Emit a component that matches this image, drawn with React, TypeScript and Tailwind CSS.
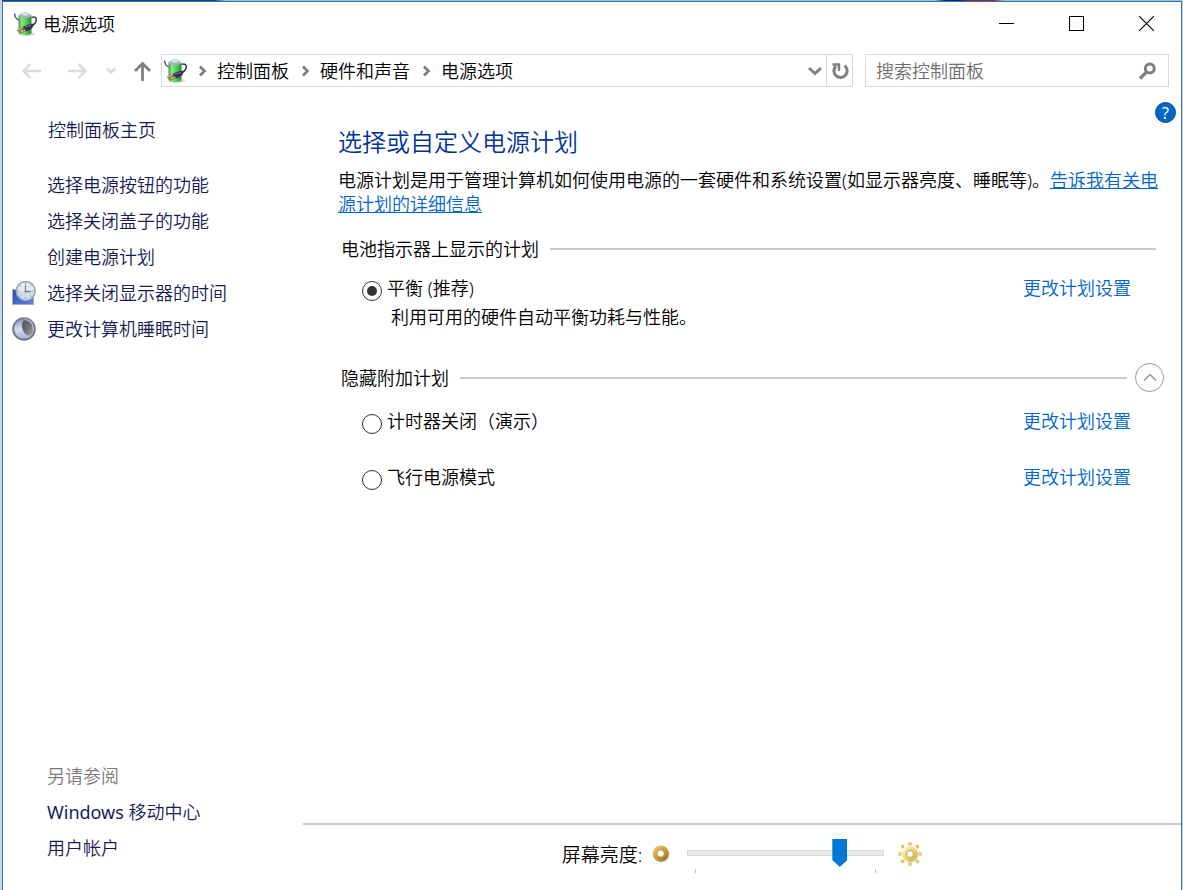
import { useState } from 'react';

type Plan = {
  id: string;
  name: string;
  description?: string;
};

const shownPlans: Plan[] = [
  { id: 'balanced', name: '平衡 (推荐)', description: '利用可用的硬件自动平衡功耗与性能。' },
];

const extraPlans: Plan[] = [
  { id: 'timers-off', name: '计时器关闭（演示）' },
  { id: 'airplane', name: '飞行电源模式' },
];

const breadcrumbs = ['控制面板', '硬件和声音', '电源选项'];

const tasks = [
  { label: '选择电源按钮的功能' },
  { label: '选择关闭盖子的功能' },
  { label: '创建电源计划' },
  { label: '选择关闭显示器的时间', icon: <DisplayClockIcon /> },
  { label: '更改计算机睡眠时间', icon: <MoonIcon /> },
];

// 绿色电池 + 电源插头
function BatteryIcon() {
  return (
    <svg viewBox="0 0 24 24" className="size-6 shrink-0" aria-hidden="true">
      <defs>
        <linearGradient id="cell" x1="0" x2="1">
          <stop offset="0" stopColor="#3f9a45" />
          <stop offset="0.25" stopColor="#8fe48c" />
          <stop offset="0.6" stopColor="#4fd057" />
          <stop offset="1" stopColor="#2c8a36" />
        </linearGradient>
      </defs>
      <ellipse cx="13" cy="22" rx="8" ry="1.8" fill="#d4d4d4" />
      <path d="M0.500 1.500c0.400 3 1.500 5.500 4.500 6.500" fill="none" stroke="#4c4f63" strokeWidth="1.400" />
      <path d="M17.500 5.500c3.500-1.500 5.500 0.500 4.700 3.500s-3 4-5 5.500" fill="none" stroke="#3c3e56" strokeWidth="1.600" />
      <path d="M4.500 3.500v17.500c1 2.700 12 2.700 13 0V3.500z" fill="url(#cell)" />
      <ellipse cx="11" cy="3.600" rx="6.500" ry="2.300" fill="#a9b6bf" />
      <ellipse cx="11" cy="2.300" rx="3.500" ry="1.700" fill="#dfe9ef" stroke="#8f9ca5" strokeWidth="0.500" />
      <path d="M19.500 11.500l-6 1.200-5 2.300 0.500 3 4.500 1.500 5-3.500z" fill="#34354a" />
      <path d="M11 15l6-1.500" stroke="#777a92" strokeWidth="1" />
      <path d="M9.500 15.500l-6 3.200M11.500 18l-5 2.500" stroke="#8a6a40" strokeWidth="2.200" />
      <path d="M9 15.400l-5 2.700M11 17.900l-4 2" stroke="#f1dfa8" strokeWidth="0.900" />
    </svg>
  );
}

function DisplayClockIcon() {
  return (
    <svg viewBox="0 0 24 24" className="size-6" aria-hidden="true">
      <defs>
        <linearGradient id="screen" x1="0" y1="0" x2="1" y2="1">
          <stop offset="0" stopColor="#2547b8" />
          <stop offset="1" stopColor="#5f86e6" />
        </linearGradient>
      </defs>
      <rect x="0.500" y="8.500" width="21" height="15" fill="url(#screen)" stroke="#a9aeb8" />
      <circle cx="13.700" cy="10" r="9.300" fill="#e3eff4" stroke="#a3a8ab" strokeWidth="1.800" />
      <path d="M6 11a7.700 7.700 0 0 0 15.400 0c-4-1-11-1-15.400 0z" fill="#c9dfea" />
      <path d="M13.700 2v2M13.700 16v2M5.700 10h2M19.700 10h2M8.200 4.500l1.200 1.200M19.200 4.500l-1.200 1.200M8.200 15.500l1.200-1.200M19.200 15.500l-1.200-1.200" stroke="#8799a4" strokeWidth="1" />
      <path d="M13.500 4.500v7M12.500 10.500h6.500" fill="none" stroke="#73828b" strokeWidth="1.300" />
    </svg>
  );
}

function MoonIcon() {
  return (
    <svg viewBox="0 0 24 24" className="size-6" aria-hidden="true">
      <defs>
        <linearGradient id="night" x1="0" x2="1" y1="0" y2="1">
          <stop offset="0" stopColor="#4f5052" />
          <stop offset="0.500" stopColor="#6d6d6e" />
          <stop offset="1" stopColor="#a3a3a2" />
        </linearGradient>
        <linearGradient id="moon" x1="0" x2="0" y1="0" y2="1">
          <stop offset="0" stopColor="#7f96c8" />
          <stop offset="0.500" stopColor="#d3dcf6" />
          <stop offset="1" stopColor="#a3afd2" />
        </linearGradient>
      </defs>
      <circle cx="12" cy="12" r="10.800" fill="url(#moon)" stroke="#7a7b7f" strokeWidth="2" />
      <path d="M12.500 2.500C19 3 22 9 20.500 16c-1.500 3-3.500 3-5.500 2C10 15 8 7 12.500 2.500z" fill="url(#night)" />
      <path d="M12.500 2.500c5 0.300 8 3.500 8.700 8" fill="none" stroke="#9cb6ee" strokeWidth="1.300" />
    </svg>
  );
}

function DimIcon() {
  return (
    <svg viewBox="0 0 18 18" className="size-[18px]" aria-hidden="true">
      <defs>
        <linearGradient id="dim" x1="0" x2="1" y1="0" y2="1">
          <stop offset="0" stopColor="#efc266" />
          <stop offset="1" stopColor="#a8741c" />
        </linearGradient>
      </defs>
      <circle cx="9.500" cy="9.700" r="8" fill="#000" opacity="0.180" />
      <circle cx="8.700" cy="8.500" r="5.800" fill="#fff" stroke="url(#dim)" strokeWidth="4.500" />
      <circle cx="8.700" cy="8.500" r="3.500" fill="none" stroke="#a9792c" strokeWidth="0.600" />
    </svg>
  );
}

function SunIcon() {
  return (
    <svg viewBox="0 0 24 24" className="size-6" aria-hidden="true">
      <defs>
        <linearGradient id="sun" x1="0" x2="1" y1="0" y2="1">
          <stop offset="0" stopColor="#f8eeb8" />
          <stop offset="0.600" stopColor="#ecd260" />
          <stop offset="1" stopColor="#d3ac40" />
        </linearGradient>
      </defs>
      <circle cx="12.600" cy="12.800" r="8" fill="#000" opacity="0.120" />
      <path
        d="M12 0.500v3M12 20.500v3M0.500 12h3M20.500 12h3M3.600 3.600l2 2M18.400 18.400l2 2M3.600 20.400l2-2M18.400 5.600l2-2"
        stroke="#c9a030"
        strokeWidth="3"
      />
      <path
        d="M12 0.500v2.500M12 20.500v2.500M0.500 12h2.500M20.500 12h2.500M3.600 3.600l1.700 1.700M18.400 18.400l1.700 1.700M3.600 20.400l1.700-1.700M18.400 5.600l1.700-1.700"
        stroke="#efd662"
        strokeWidth="1.800"
      />
      <circle cx="12" cy="12" r="5.600" fill="#fff" stroke="url(#sun)" strokeWidth="4" />
      <circle cx="12" cy="12" r="3.500" fill="none" stroke="#a89468" strokeWidth="0.900" />
    </svg>
  );
}

function ChevronRight() {
  return (
    <svg viewBox="0 0 10 12" className="h-3 w-[10px] shrink-0" fill="none" stroke="#7f7f7f" strokeWidth="2.800" aria-hidden="true">
      <path d="M2 1.500l4.500 4.500L2 10.500" />
    </svg>
  );
}

function TitleBar() {
  return (
    <header className="flex h-[43px] items-center pl-[11px]">
      <BatteryIcon />
      <h1 className="ml-[5px] flex-1 text-[18px] leading-6">电源选项</h1>
      <button type="button" aria-label="最小化" className="grid h-full w-[70px] place-items-center">
        <svg viewBox="0 0 15 15" className="size-[15px]" stroke="#000" shapeRendering="crispEdges">
          <path d="M0 7.500h15" />
        </svg>
      </button>
      <button type="button" aria-label="最大化" className="grid h-full w-[70px] place-items-center">
        <svg viewBox="0 0 15 15" className="size-[15px]" fill="none" stroke="#000" shapeRendering="crispEdges">
          <rect x="0.500" y="0.500" width="14" height="14" />
        </svg>
      </button>
      <button type="button" aria-label="关闭" className="grid h-full w-[70px] place-items-center">
        <svg viewBox="0 0 15 15" className="size-[15px]" stroke="#000" strokeWidth="1.100">
          <path d="M0 0l15 15M15 0L0 15" />
        </svg>
      </button>
    </header>
  );
}

function NavBar() {
  return (
    <div className="mt-[9px] flex h-[33px] items-center pr-3 pl-[18px]">
      <button type="button" aria-label="后退">
        <svg viewBox="0 0 20 18" className="h-[18px] w-5" fill="none" stroke="#dcdcdc" strokeWidth="2.500">
          <path d="M20 9H2.500M9.500 2l-7 7 7 7" />
        </svg>
      </button>
      <button type="button" aria-label="前进" className="ml-[27px]">
        <svg viewBox="0 0 20 18" className="h-[18px] w-5" fill="none" stroke="#dcdcdc" strokeWidth="2.500">
          <path d="M0 9h17.500M10.500 2l7 7-7 7" />
        </svg>
      </button>
      <button type="button" aria-label="最近的位置" className="ml-[17px]">
        <svg viewBox="0 0 12 8" className="h-2 w-3" fill="none" stroke="#dcdcdc" strokeWidth="2.500">
          <path d="M2 1.500l4 4 4-4" />
        </svg>
      </button>
      <button type="button" aria-label="向上" className="ml-4">
        <svg viewBox="0 0 19 20" className="h-5 w-[19px]" fill="none" stroke="#7f7f7f" strokeWidth="2.800">
          <path d="M9.500 20V3M2 10l7.500-7.500L17 10" />
        </svg>
      </button>

      <div className="ml-[9px] flex h-full flex-1 items-center border border-[#d9d9d9] pl-[2px]">
        <BatteryIcon />
        <nav aria-label="位置" className="flex flex-1 items-center">
          {breadcrumbs.map((crumb, i) => (
            <span key={crumb} className={i === 0 ? 'ml-[10px] flex items-center' : 'ml-3 flex items-center'}>
              <ChevronRight />
              <a href="#" className="ml-[9px] text-[18px] leading-6">
                {crumb}
              </a>
            </span>
          ))}
        </nav>
        <button type="button" aria-label="以前的位置" className="grid h-full w-[22px] place-items-center">
          <svg viewBox="0 0 14 10" className="h-[10px] w-[14px]" fill="none" stroke="#7f7f7f" strokeWidth="3">
            <path d="M1 2l6 5.500L13 2" />
          </svg>
        </button>
        <button type="button" aria-label="刷新" className="grid h-full w-[26px] place-items-center border-l border-[#d9d9d9]">
          <svg viewBox="0 0 18 18" className="size-[18px]" fill="none" stroke="#7f7f7f" strokeWidth="3">
            <path d="M13.500 3.600a6.600 6.600 0 1 1-8.500 0.500" />
            <path d="M1.500 2.500h6.500V9" strokeWidth="2.400" />
          </svg>
        </button>
      </div>

      <div className="ml-3 flex h-full w-[304px] items-center border border-[#d9d9d9] pr-3 pl-[10px]">
        <input
          type="text"
          aria-label="搜索控制面板"
          placeholder="搜索控制面板"
          className="min-w-0 flex-1 text-[18px] leading-6 outline-none placeholder:text-[#6d6d6d]"
        />
        <svg viewBox="0 0 18 18" className="size-[18px]" fill="none" stroke="#7f7f7f" aria-hidden="true">
          <circle cx="11.800" cy="6.500" r="4.500" strokeWidth="3" />
          <path d="M8.500 10l-6.500 6.500" strokeWidth="3.200" />
        </svg>
      </div>
    </div>
  );
}

function Sidebar() {
  return (
    <aside className="flex w-[300px] shrink-0 flex-col pt-[25px] pb-6 pl-[9px] text-[18px] leading-9 text-[#151c55]">
      <a href="#" className="ml-9">
        控制面板主页
      </a>
      <ul className="mt-[19px]">
        {tasks.map((task) => (
          <li key={task.label} className="flex items-center gap-[11px]">
            <span className="size-6">{task.icon}</span>
            <a href="#">{task.label}</a>
          </li>
        ))}
      </ul>
      <div className="mt-auto ml-[35px] flex flex-col">
        <h2 className="text-[#7a7a7a]">另请参阅</h2>
        <a href="#">
          <span className="font-normal">Windows</span> 移动中心
        </a>
        <a href="#">用户帐户</a>
      </div>
    </aside>
  );
}

function PlanRow({ plan, selected, onSelect }: { plan: Plan; selected: boolean; onSelect: (id: string) => void }) {
  return (
    <div className="pr-[50px] pl-[59px]">
      <div className="flex h-6 items-center">
        <input
          type="radio"
          id={plan.id}
          name="plan"
          checked={selected}
          onChange={() => onSelect(plan.id)}
          className="mt-[6px] grid size-5 appearance-none place-content-center rounded-full border border-[#333] bg-white before:size-[10px] before:rounded-full checked:before:bg-[#333]"
        />
        <label htmlFor={plan.id} className="ml-[5px] flex-1">
          {plan.name}
        </label>
        <a href="#" className="text-[#0066cc]">
          更改计划设置
        </a>
      </div>
      {plan.description && <p className="mt-[5px] ml-[29px]">{plan.description}</p>}
    </div>
  );
}

function PowerPlans() {
  const [plan, setPlan] = useState('balanced');
  const [expanded, setExpanded] = useState(true);

  return (
    <section className="flex-1 text-[18px] leading-6">
      <div className="flex justify-end pt-[15px] pr-[5px]">
        <button
          type="button"
          aria-label="帮助"
          className="grid size-[21px] place-items-center rounded-full border border-[#004a94] bg-[#0067c8] text-[16px] leading-5 font-normal text-white"
        >
          ?
        </button>
      </div>
      <h2 className="mt-[3px] pl-[35px] text-[24px] leading-8 text-[#003399]">选择或自定义电源计划</h2>
      <p className="mt-[10px] pr-4 pl-[35px]">
        电源计划是用于管理计算机如何使用电源的一套硬件和系统设置(如显示器亮度、睡眠等)。
        <a href="#" className="text-[#0066cc] underline">
          告诉我有关电源计划的详细信息
        </a>
      </p>

      <div className="mt-[21px] flex items-center gap-[11px] pr-[25px] pl-[38px]">
        <h3>电池指示器上显示的计划</h3>
        <div className="h-[2px] flex-1 bg-[#cacaca]" />
      </div>
      <div className="mt-[15px]">
        {shownPlans.map((p) => (
          <PlanRow key={p.id} plan={p} selected={plan === p.id} onSelect={setPlan} />
        ))}
      </div>

      <div className="mt-[34px] flex items-center pr-[17px] pl-[38px]">
        <h3>隐藏附加计划</h3>
        <div className="mr-2 ml-[11px] h-[2px] flex-1 bg-[#cacaca]" />
        <button
          type="button"
          aria-label="隐藏附加计划"
          aria-expanded={expanded}
          onClick={() => setExpanded(!expanded)}
          className="grid size-[29px] place-items-center rounded-full border border-[#999]"
        >
          <svg viewBox="0 0 14 10" className="h-[10px] w-[14px]" fill="none" stroke="#999" strokeWidth="1.500">
            <path d={expanded ? 'M1 7.500l6-6 6 6' : 'M1 2l6 6 6-6'} />
          </svg>
        </button>
      </div>
      {expanded && (
        <div className="mt-[17px] flex flex-col gap-8">
          {extraPlans.map((p) => (
            <PlanRow key={p.id} plan={p} selected={plan === p.id} onSelect={setPlan} />
          ))}
        </div>
      )}
    </section>
  );
}

function BrightnessBar() {
  const [brightness, setBrightness] = useState(80);

  return (
    <footer className="flex h-[67px] items-start justify-center border-t-2 border-[#cacaca] pt-[14px]">
      <label htmlFor="brightness" className="mt-1 mr-[10px] text-[19px] leading-6">
        屏幕亮度:
      </label>
      <span className="mt-[6px]">
        <DimIcon />
      </span>
      <div className="mr-[14px] ml-[17px] w-[197px]">
        <input
          type="range"
          id="brightness"
          min={0}
          max={100}
          value={brightness}
          onChange={(e) => setBrightness(Number(e.target.value))}
          className="block h-7 w-full appearance-none bg-transparent [&::-webkit-slider-runnable-track]:h-[6px] [&::-webkit-slider-runnable-track]:border [&::-webkit-slider-runnable-track]:border-[#d6d6d6] [&::-webkit-slider-runnable-track]:bg-[#e7eaea] [&::-webkit-slider-thumb]:mt-[-12px] [&::-webkit-slider-thumb]:h-7 [&::-webkit-slider-thumb]:w-[15px] [&::-webkit-slider-thumb]:appearance-none [&::-webkit-slider-thumb]:bg-[#0078d7] [&::-webkit-slider-thumb]:[clip-path:polygon(0_0,100%_0,100%_75%,50%_100%,0_75%)]"
        />
        <div className="mt-[2px] flex justify-between px-2">
          <span className="h-1 w-px bg-[#c4c4c4]" />
          <span className="h-1 w-px bg-[#c4c4c4]" />
        </div>
      </div>
      <span className="mt-[3px]">
        <SunIcon />
      </span>
    </footer>
  );
}

export default function App() {
  return (
    <div className="flex min-h-screen flex-col bg-[#d5d5d5] pr-px pl-[2px] font-['Noto_Sans','Noto_Sans_CJK_SC',sans-serif] font-[350] text-black">
      {/* 窗口后面露出的桌面 */}
      <div className="h-px bg-[linear-gradient(to_right,#3b3b52_18%,#b9b9b9_19%,#b9b9b9_79%,#1c2148_80%,#1c2148_81%,#c01818_82%,#c01818_84%,#b9b9b9_85%)]" />
      <div className="flex flex-1 flex-col border-x border-t border-[#1979ca] bg-white">
        <TitleBar />
        <NavBar />
        <div className="flex flex-1">
          <Sidebar />
          <main className="flex min-w-0 flex-1 flex-col">
            <PowerPlans />
            <BrightnessBar />
          </main>
        </div>
      </div>
    </div>
  );
}
